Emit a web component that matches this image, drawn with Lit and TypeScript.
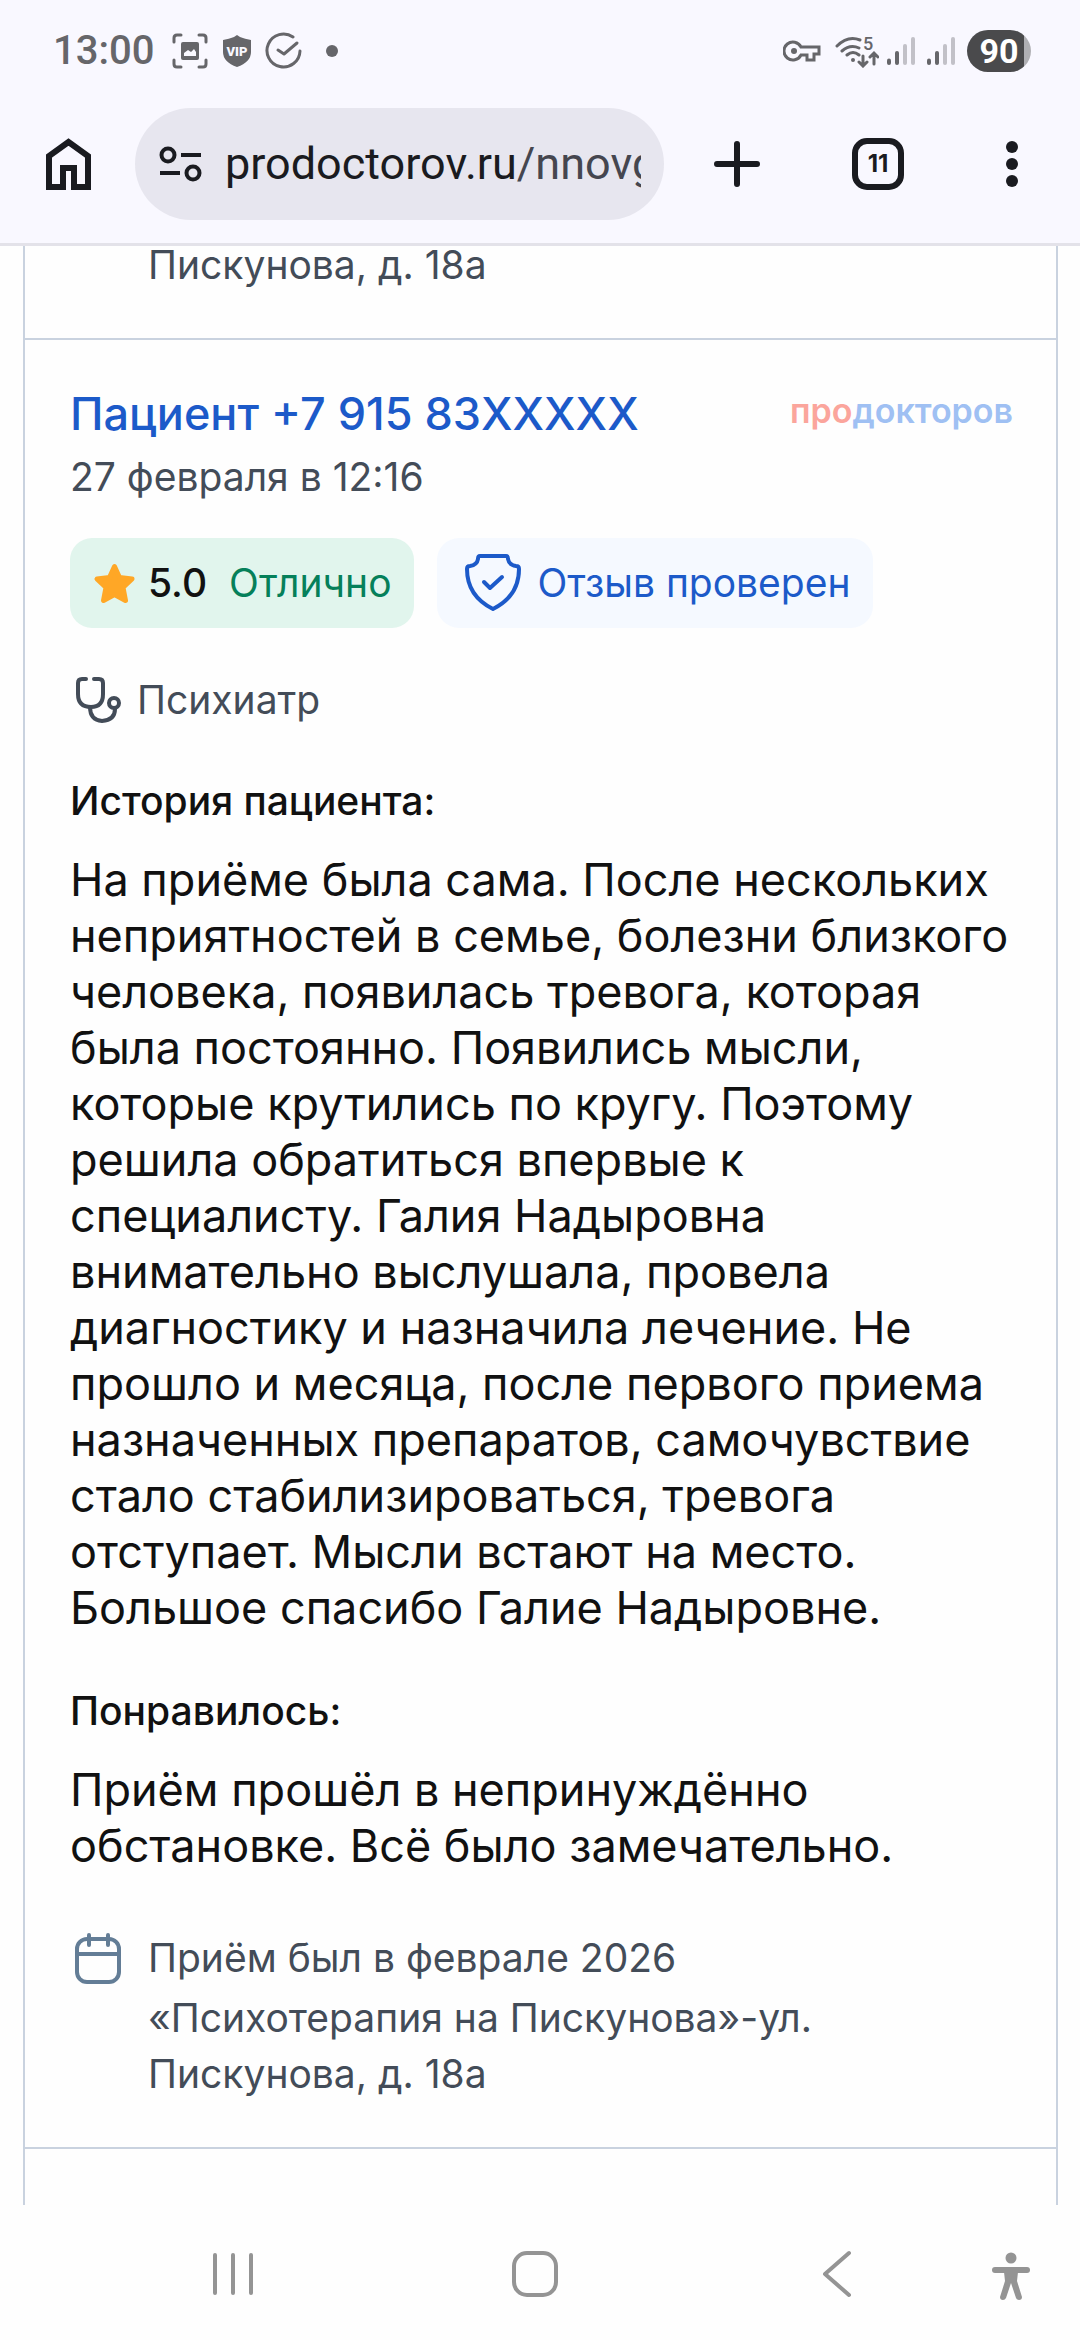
import { LitElement, html, css } from "lit";
import { customElement } from "lit/decorators.js";

@customElement("status-bar")
class StatusBar extends LitElement {
  static styles = css`
    :host {
      display: flex;
      align-items: center;
      justify-content: space-between;
      height: 102px;
      padding: 0 49px 0 53px;
      color: #66666a;
      font-family: Roboto, sans-serif;
    }
    .group { display: flex; align-items: center; }
    .clock { font-size: 40px; font-weight: 500; line-height: 46px; margin-right: 18px; }
    .capture { margin-right: 14px; }
    .vip { margin-right: 13px; }
    .check { margin-right: 24px; }
    .key { margin-right: 14px; }
    .wifi { margin-right: 8px; }
    .signal { margin-right: 12px; }
    svg { display: block; }
    .battery {
      width: 64px;
      height: 42px;
      border-radius: 21px;
      background: linear-gradient(to right, #4a4a4c 57px, #b0b0b4 57px);
      color: #fff;
      font-size: 34px;
      font-weight: 700;
      line-height: 42px;
      text-align: center;
    }
  `;

  private signal() {
    return html`<svg class="signal" width="28" height="30" viewBox="0 0 28 30" fill="none" stroke-width="4" stroke-linecap="round" aria-hidden="true">
      <g stroke="#66666a"><path d="M2 24.500V27"/><path d="M10 17V27"/></g>
      <g stroke="#c2c1c8"><path d="M18 10V27"/><path d="M26 3V27"/></g>
    </svg>`;
  }

  render() {
    return html`
      <div class="group">
        <span class="clock">13:00</span>
        <svg class="capture" width="36" height="36" viewBox="0 0 36 36" fill="none" stroke="#66666a" stroke-width="3" stroke-linecap="round" aria-hidden="true">
          <path d="M2 9V5q0-3 3-3h4M27 2h4q3 0 3 3v4M34 27v4q0 3-3 3h-4M9 34H5q-3 0-3-3v-4"/>
          <rect x="9" y="9" width="18" height="18" rx="2" fill="#66666a" stroke="none"/>
          <path d="M12 23v-3l4-3 3 2 3-3 2 3v4z" fill="#f9f8ff" stroke="none"/>
        </svg>
        <svg class="vip" width="30" height="34" viewBox="0 0 30 34" aria-hidden="true">
          <path d="M15 1l3 2q5 2 11 3v12q0 10-14 15Q1 28 1 18V6q6-1 11-3z" fill="#66666a"/>
          <text x="15" y="22" text-anchor="middle" font-family="Roboto, sans-serif" font-size="13" font-weight="900" fill="#f9f8ff">VIP</text>
        </svg>
        <svg class="check" width="37" height="38" viewBox="0 0 37 38" fill="none" stroke="#66666a" stroke-width="3" stroke-linecap="round" stroke-linejoin="round" aria-hidden="true">
          <path d="M28 5A16.500 16.500 0 1 0 35 19"/><path d="M13 18l6 4 13-11"/>
        </svg>
        <svg width="12" height="12" viewBox="0 0 12 12" aria-hidden="true"><circle cx="6" cy="6" r="6" fill="#66666a"/></svg>
      </div>
      <div class="group">
        <svg class="key" width="38" height="24" viewBox="0 0 38 24" fill="none" stroke="#66666a" stroke-width="3" aria-hidden="true">
          <path d="M18 8A9 9 0 1 0 18 16H24V21H31V15H36V8Z"/><circle cx="11" cy="12" r="3" fill="#66666a" stroke="none"/>
        </svg>
        <svg class="wifi" width="44" height="34" viewBox="0 0 44 34" fill="none" stroke="#66666a" stroke-width="3" stroke-linecap="round" aria-hidden="true">
          <path d="M2 12Q13 1 25 6M7 17Q15 10 24 14M12 21Q18 16 24 21"/>
          <circle cx="18" cy="26" r="2" fill="#66666a" stroke="none"/>
          <path d="M28 22V31M24 28l4 4 4-4M39 30V20M35 23l4-4 4 4"/>
          <text x="28" y="16" font-family="Roboto, sans-serif" font-size="18" font-weight="500" fill="#66666a" stroke="none">5</text>
        </svg>
        ${this.signal()}${this.signal()}
        <div class="battery">90</div>
      </div>
    `;
  }
}

@customElement("browser-toolbar")
class BrowserToolbar extends LitElement {
  static styles = css`
    :host {
      display: flex;
      align-items: center;
      padding: 6px 62px 23px 44px;
      border-bottom: 3px solid #e3e2e9;
      color: #1a1b20;
      font-family: Inter, sans-serif;
    }
    button {
      display: flex;
      padding: 0;
      border: 0;
      background: none;
      color: inherit;
      font: inherit;
    }
    svg { display: block; }
    .address {
      display: flex;
      flex: 1;
      min-width: 0;
      align-items: center;
      gap: 23px;
      height: 112px;
      margin: 0 50px 0 42px;
      padding: 0 23px 0 24px;
      box-sizing: border-box;
      border-radius: 56px;
      background: #e7e6ef;
    }
    .url {
      flex: 1;
      min-width: 0;
      overflow: hidden;
      white-space: nowrap;
      color: #45464f;
      font-family: Roboto, sans-serif;
      font-size: 45px;
      line-height: 56px;
      text-decoration: none;
    }
    .host { color: #1a1b20; }
    .plus { margin-right: 92px; }
    .tabs {
      width: 52px;
      height: 52px;
      box-sizing: border-box;
      align-items: center;
      justify-content: center;
      margin-right: 102px;
      border: 6px solid #1a1b20;
      border-radius: 15px;
      font-size: 24px;
      font-weight: 700;
      line-height: 24px;
    }
  `;

  render() {
    return html`
      <button aria-label="Главная">
        <svg width="49" height="54" viewBox="0 0 49 54" fill="none" stroke="#1a1b20" stroke-width="6" aria-hidden="true">
          <path d="M5 50V19L24.500 5 44 19V50H30V31H19V50Z"/>
        </svg>
      </button>
      <div class="address">
        <svg width="43" height="38" viewBox="0 0 43 38" fill="none" stroke="#1a1b20" stroke-width="4" aria-hidden="true">
          <circle cx="9" cy="10" r="6.500"/><path d="M22 10H42M1 28H21"/><circle cx="34" cy="28" r="6.500"/>
        </svg>
        <a class="url" href="#"><span class="host">prodoctorov.ru</span>/nnovgorod</a>
      </div>
      <button class="plus" aria-label="Новая вкладка">
        <svg width="46" height="48" viewBox="0 0 46 48" stroke="#1a1b20" stroke-width="6" stroke-linecap="round" aria-hidden="true">
          <path d="M23 4V44M3 24H43"/>
        </svg>
      </button>
      <button class="tabs" aria-label="Вкладки">11</button>
      <button aria-label="Меню">
        <svg width="12" height="48" viewBox="0 0 12 48" fill="#1a1b20" aria-hidden="true">
          <circle cx="6" cy="7" r="6"/><circle cx="6" cy="24" r="6"/><circle cx="6" cy="41" r="6"/>
        </svg>
      </button>
    `;
  }
}

@customElement("review-card")
class ReviewCard extends LitElement {
  static styles = css`
    :host {
      display: block;
      padding: 46px 43px 45px 45px;
      border-bottom: 2px solid #c9d2df;
    }
    svg { display: block; flex: none; }
    .head { display: flex; align-items: flex-start; justify-content: space-between; }
    .author {
      color: #1c5ac9;
      font-size: 45px;
      font-weight: 500;
      line-height: 56px;
      text-decoration: none;
    }
    .logo { color: #9fc0f3; font-size: 34px; font-weight: 600; line-height: 50px; }
    .logo-accent { color: #fba59c; }
    .meta { color: #434c58; font-size: 39px; line-height: 56px; }
    .date { margin: 7px 0 33px; }
    .badges { display: flex; gap: 23px; }
    .badge {
      display: flex;
      align-items: center;
      gap: 11px;
      height: 90px;
      padding: 0 22px;
      border-radius: 22px;
      font-size: 39px;
      line-height: 56px;
    }
    .rating { background: #e1f5ed; color: #05805a; }
    .score { margin-right: 11px; color: #111; font-weight: 500; }
    .verified { background: #f5f9ff; color: #1c5ac9; }
    .speciality { display: flex; align-items: center; gap: 11px; margin: 44px 0 45px; }
    .sections { display: flex; flex-direction: column; gap: 47px; }
    h3 { margin: 0; color: #111; font-size: 39px; font-weight: 500; line-height: 56px; }
    .text { margin: 23px 0 0; color: #111; font-size: 45px; line-height: 56px; }
    .visit { display: flex; align-items: flex-start; gap: 22px; margin-top: 56px; }
    .visit-text { display: flex; flex-direction: column; gap: 4px; }
    .place { max-width: 700px; }
  `;

  render() {
    return html`
      <div class="head">
        <a class="author" href="#">Пациент +7 915 83XXXXX</a>
        <span class="logo"><span class="logo-accent">про</span>докторов</span>
      </div>
      <div class="meta date">27 февраля в 12:16</div>
      <div class="badges">
        <div class="badge rating">
          <svg width="45" height="45" viewBox="0 0 45 45" fill="#ffa726" stroke="#ffa726" stroke-width="5" stroke-linejoin="round" aria-hidden="true">
            <path d="M22.500 5.500L27.500 16.500 40 18 31 26.500 33.500 39.500 22.500 33.500 11.500 39.500 14 26.500 5 18 17.500 16.500Z"/>
          </svg>
          <span class="score">5.0</span><span>Отлично</span>
        </div>
        <div class="badge verified">
          <svg width="68" height="68" viewBox="0 0 68 68" fill="none" stroke="#1c5ac9" stroke-width="4" stroke-linecap="round" stroke-linejoin="round" aria-hidden="true">
            <path d="M21 7H47Q49 7 49 10 50 16 57 17 60 17 60 20 60 47 34 60 8 47 8 20 8 17 11 17 18 16 19 10 19 7 21 7Z"/>
            <path d="M25 33l6 6 12-11"/>
          </svg>
          <span>Отзыв проверен</span>
        </div>
      </div>
      <div class="meta speciality">
        <svg width="56" height="56" viewBox="0 0 56 56" fill="none" stroke="#434c58" stroke-width="4" stroke-linecap="round" stroke-linejoin="round" aria-hidden="true">
          <path d="M16 7H12Q8 7 8 11V22Q8 35 21 35 33 35 33 22V11Q33 7 29 7H24"/>
          <path d="M20 35Q20 48 32 49 45 48 45 37"/><circle cx="44" cy="31" r="5"/>
        </svg>
        <span>Психиатр</span>
      </div>
      <div class="sections">
        <section>
          <h3>История пациента:</h3>
          <p class="text">На приёме была сама. После нескольких неприятностей в семье, болезни близкого человека, появилась тревога, которая была постоянно. Появились мысли, которые крутились по кругу. Поэтому решила обратиться впервые к специалисту. Галия Надыровна внимательно выслушала, провела диагностику и назначила лечение. Не прошло и месяца, после первого приема назначенных препаратов, самочувствие стало стабилизироваться, тревога отступает. Мысли встают на место. Большое спасибо Галие Надыровне.</p>
        </section>
        <section>
          <h3>Понравилось:</h3>
          <p class="text">Приём прошёл в непринуждённо обстановке. Всё было замечательно.</p>
        </section>
      </div>
      <div class="visit meta">
        <svg width="56" height="56" viewBox="0 0 56 56" fill="none" stroke="#637d96" stroke-width="4" stroke-linecap="round" stroke-linejoin="round" aria-hidden="true">
          <rect x="7" y="9" width="42" height="43" rx="10"/><path d="M7 24H49M19 5V15M38 5V15"/>
        </svg>
        <div class="visit-text">
          <span>Приём был в феврале 2026</span>
          <span class="place">«Психотерапия на Пискунова»-ул. Пискунова, д. 18а</span>
        </div>
      </div>
    `;
  }
}

@customElement("system-nav")
class SystemNav extends LitElement {
  static styles = css`
    :host {
      display: grid;
      grid-template-columns: 302fr 302fr 302fr 45fr;
      align-items: center;
      height: 135px;
      box-sizing: border-box;
      padding: 3px 47px 0 82px;
    }
    button { display: flex; justify-content: center; padding: 0; border: 0; background: none; }
    svg { display: block; flex: none; }
  `;

  render() {
    return html`
      <button aria-label="Недавние">
        <svg width="44" height="48" viewBox="0 0 44 48" stroke="#949494" stroke-width="4" stroke-linecap="round" aria-hidden="true"><path d="M4 5V43M22 5V43M40 5V43"/></svg>
      </button>
      <button aria-label="Домой">
        <svg width="48" height="48" viewBox="0 0 48 48" fill="none" stroke="#949494" stroke-width="4" aria-hidden="true"><rect x="3" y="3" width="42" height="42" rx="13"/></svg>
      </button>
      <button aria-label="Назад">
        <svg width="32" height="48" viewBox="0 0 32 48" fill="none" stroke="#949494" stroke-width="4" stroke-linecap="round" stroke-linejoin="round" aria-hidden="true"><path d="M28 3L4 24 28 45"/></svg>
      </button>
      <button aria-label="Специальные возможности">
        <svg width="40" height="52" viewBox="0 -4 40 52" fill="#949494" aria-hidden="true">
          <circle cx="20" cy="6" r="5.500"/>
          <rect x="1" y="15" width="38" height="6" rx="3"/>
          <path d="M13 20H27L26 29 31 45q0 3-3 3-2 0-3-2L20 31 15 46q-1 2-3 2-3 0-3-3L14 29z"/>
        </svg>
      </button>
    `;
  }
}

@customElement("app-root")
class AppRoot extends LitElement {
  static styles = css`
    :host {
      display: flex;
      flex-direction: column;
      min-height: 100vh;
      background: #fefefe;
      font-family: Inter, "Liberation Sans", sans-serif;
    }
    .chrome { background: #f9f8ff; }
    .page {
      flex: 1;
      margin: 0 22px 0 23px;
      border: solid #c9d2df;
      border-width: 0 2px;
    }
    .previous {
      padding: 0 0 55px 123px;
      border-bottom: 2px solid #c9d2df;
      color: #434c58;
      font-size: 39px;
      line-height: 37px;
    }
  `;

  render() {
    return html`
      <header class="chrome">
        <status-bar></status-bar>
        <browser-toolbar></browser-toolbar>
      </header>
      <main class="page">
        <div class="previous">Пискунова, д. 18а</div>
        <review-card></review-card>
      </main>
      <system-nav></system-nav>
    `;
  }
}
